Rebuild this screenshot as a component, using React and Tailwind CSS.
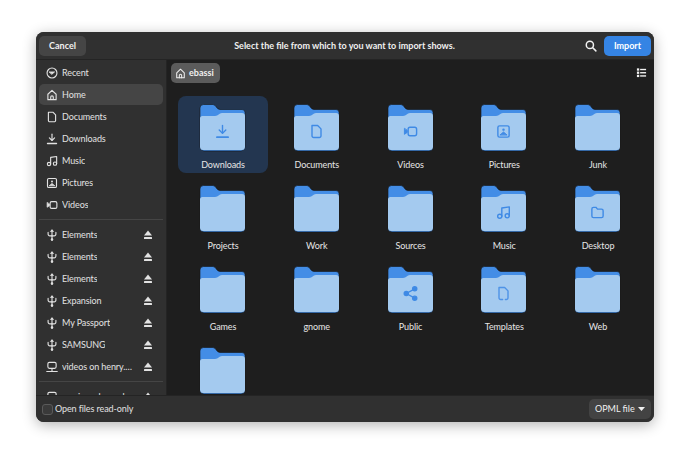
const Ico = ({ size = 12, className = '', children }) => (
  <svg width={size} height={size} viewBox="0 0 16 16" fill="none" stroke="currentColor" strokeWidth="1.5" strokeLinecap="round" strokeLinejoin="round" className={`shrink-0 ${className}`}>
    {children}
  </svg>
);

const icons = {
  recent: <><circle cx="8" cy="8" r="6.6" /><path d="M4.500 6.500h7L8 9.500z" fill="currentColor" strokeWidth="1" /></>,
  home: <><path d="M2.500 14.200V7L8 1.800 13.500 7v7.200z" /><path d="M6.300 14v-3.200a1.700 1.700 0 0 1 3.400 0V14" /></>,
  file: <path d="M3.200 1.600h6l3.600 3.600v7.400a1.800 1.800 0 0 1-1.800 1.800H5a1.800 1.800 0 0 1-1.800-1.800z" />,
  download: <><path d="M8 1.500v8" /><path d="M4.500 6.500 8 10l3.500-3.500" /><path d="M2 14h12" strokeWidth="1.800" /></>,
  music: <><circle cx="4" cy="12" r="2.200" /><circle cx="12" cy="11.500" r="2.200" /><path d="M6.200 12V3.200L14.200 2v9.500" /></>,
  pictures: <><rect x="2" y="2" width="12" height="12" rx="1.800" /><circle cx="8" cy="6" r="1.300" fill="currentColor" strokeWidth="0" /><path d="M4.500 11.500 8 8.500l3.500 3z" fill="currentColor" strokeWidth="1" /></>,
  videos: <><rect x="5.500" y="3.500" width="9" height="9" rx="2" /><path d="M1.500 5v6l3-2V7z" fill="currentColor" strokeWidth="1" /></>,
  usb: <><path d="M8 1.500V15" /><path d="M2.800 4.500v2.200A2.400 2.400 0 0 0 5.200 9.200H8" /><path d="M13.200 4.500v2.200a2.400 2.400 0 0 1-2.400 2.500H8" /><path d="M6.200 3 8 1l1.800 2z" fill="currentColor" strokeWidth="1" /><circle cx="8" cy="14" r="1" fill="currentColor" /></>,
  network: <><rect x="2.500" y="1.800" width="11" height="8" rx="2" /><path d="M8 10v3.500" /><path d="M1 14h14" /></>,
  folder: <path d="M2 4.200A1.700 1.700 0 0 1 3.700 2.500h2.600L8 4.400h4.300A1.700 1.700 0 0 1 14 6.100v5.700a1.700 1.700 0 0 1-1.700 1.700H3.700A1.700 1.700 0 0 1 2 11.800z" />,
  share: <><circle cx="3.500" cy="8" r="2.200" fill="currentColor" /><circle cx="12.500" cy="3" r="2.200" fill="currentColor" /><circle cx="12.500" cy="13" r="2.200" fill="currentColor" /><path d="m3.500 8 9-5M3.500 8l9 5" /></>,
  template: <path d="M3.200 1.600h6l3.600 3.600v7.400a1.800 1.800 0 0 1-1.800 1.800H5a1.800 1.800 0 0 1-1.800-1.800z" strokeDasharray="22 3" opacity="0.85" />,
};

const Eject = () => (
  <svg width="12" height="12" viewBox="0 0 12 12" className="ml-auto mr-[6px] shrink-0" fill="currentColor">
    <path d="M6 1.500 10 6.500H2z" />
    <rect x="2" y="8" width="8" height="2" rx="0.500" />
  </svg>
);

const SideRow = ({ icon, label, active, eject }) => (
  <div className={`flex items-center h-[21px] mb-[1px] pl-[7px] pr-[3px] rounded-[5px] text-[9px] tracking-[-0.1px] text-[#e2e2e2] ${active ? 'bg-[#454545]' : ''}`}>
    <Ico className="mr-[4px]">{icons[icon]}</Ico>
    <span className="truncate max-w-[72px] pt-[1px]">{label}</span>
    {eject && <Eject />}
  </div>
);

const Folder = ({ glyph }) => (
  <div className="relative w-[47px] h-[48px] -ml-[1px]">
    <svg width="47" height="48" viewBox="0 0 47 48">
      <path d="M1 4a3.500 3.500 0 0 1 3.500-3.500h9.500c3 0 3.500 5 7 5h22a3 3 0 0 1 3 3V43a4 4 0 0 1-4 4H5a4 4 0 0 1-4-4z" fill="#438de6" stroke="#141414" strokeWidth="0.600" />
      <path d="M1 14.500c0-1.500.8-2.500 2.500-2.500H16c3.500 0 4-3 7-3h20a3 3 0 0 1 3 3V42.500a3.500 3.500 0 0 1-3.500 3.500H4.500A3.500 3.500 0 0 1 1 42.500z" fill="#a4caef" />
    </svg>
    {glyph && (
      <div className="absolute inset-x-0 top-[20px] flex justify-center text-[#3f8ae5]">
        <Ico size={15}>{icons[glyph]}</Ico>
      </div>
    )}
  </div>
);

const places = [
  ['recent', 'Recent'],
  ['home', 'Home', true],
  ['file', 'Documents'],
  ['download', 'Downloads'],
  ['music', 'Music'],
  ['pictures', 'Pictures'],
  ['videos', 'Videos'],
];

const drives = [
  ['usb', 'Elements'],
  ['usb', 'Elements'],
  ['usb', 'Elements'],
  ['usb', 'Expansion'],
  ['usb', 'My Passport'],
  ['usb', 'SAMSUNG'],
  ['network', 'videos on henry.local'],
];

const folders = [
  ['Downloads', 'download', true],
  ['Documents', 'file'],
  ['Videos', 'videos'],
  ['Pictures', 'pictures'],
  ['Junk'],
  ['Projects'],
  ['Work'],
  ['Sources'],
  ['Music', 'music'],
  ['Desktop', 'folder'],
  ['Games'],
  ['gnome'],
  ['Public', 'share'],
  ['Templates', 'template'],
  ['Web'],
  [''],
];

export default function App() {
  return (
    <div className="w-[690px] h-[460px] bg-white pl-[36px] pt-[32px] overflow-hidden font-['Lato',sans-serif]">
      <div className="w-[618px] h-[390px] rounded-[8px] bg-[#303030] flex flex-col overflow-hidden shadow-[0_3px_14px_rgba(0,0,0,0.3)]">
        {/* header */}
        <div className="h-[28px] shrink-0 bg-[#303030] border-b border-[#242424] flex items-center px-[3px]">
          <button className="w-[47px] h-[20px] rounded-[5px] bg-[#454545] text-[9px] font-bold text-[#f0f0f0]">Cancel</button>
          <div className="flex-1 text-center text-[9px] font-bold text-[#f0f0f0] pl-[18px] pt-[1px]">Select the file from which to you want to import shows.</div>
          <svg width="12" height="12" viewBox="0 0 16 16" fill="none" stroke="#f2f2f2" strokeWidth="2" className="mr-[7px]">
            <circle cx="6.500" cy="6.500" r="4.800" />
            <path d="m10 10 4.500 4.500" strokeLinecap="round" />
          </svg>
          <button className="w-[47px] h-[20px] rounded-[5px] bg-[#3584e4] text-[9px] font-bold text-white">Import</button>
        </div>

        <div className="flex-1 flex min-h-0">
          {/* sidebar */}
          <div className="w-[131px] shrink-0 bg-[#303030] border-r border-[#242424] px-[3px] pt-[2px] overflow-hidden">
            {places.map(([icon, label, active]) => (
              <SideRow key={label} icon={icon} label={label} active={active} />
            ))}
            <div className="h-px bg-[#454545] mt-[4px] mb-[4px]" />
            {drives.map(([icon, label], i) => (
              <SideRow key={i} icon={icon} label={label} eject />
            ))}
            <div className="h-px bg-[#454545] mt-[4px] mb-[4px]" />
            <SideRow icon="network" label="music on henry.local" eject />
          </div>

          {/* main */}
          <div className="flex-1 min-w-0 bg-[#1e1e1e] overflow-hidden">
            <div className="flex justify-between pl-[4px] pr-[7px] pt-[3px] h-[36px]">
              <div className="flex items-center h-[20px] w-[49px] rounded-[5px] bg-[#5b5b5b] pl-[4px] text-[9px] font-bold text-[#f0f0f0] gap-[3px]">
                <Ico size={11}>{icons.home}</Ico>
                ebassi
              </div>
              <svg width="11" height="11" viewBox="0 0 12 12" fill="#f2f2f2" className="mt-[4px]">
                <rect x="1" y="1.500" width="2.500" height="2.500" />
                <rect x="1" y="5" width="2.500" height="2.500" />
                <rect x="1" y="8.500" width="2.500" height="2.500" />
                <rect x="4.500" y="2" width="6.500" height="1.500" />
                <rect x="4.500" y="5.500" width="6.500" height="1.500" />
                <rect x="4.500" y="9" width="6.500" height="1.500" />
              </svg>
            </div>
            <div className="grid grid-cols-[repeat(5,90px)] auto-rows-[77px] gap-x-[3.750px] gap-y-[4px] pl-[11px]">
              {folders.map(([name, glyph, selected], i) => (
                <div key={i} className={`flex flex-col items-center pt-[8px] rounded-[8px] ${selected ? 'bg-[#233650]' : ''}`}>
                  <Folder glyph={glyph} />
                  {name && <span className="text-[9px] tracking-[-0.1px] text-[#e6e6e6] mt-[7px] leading-[12px]">{name}</span>}
                </div>
              ))}
            </div>
          </div>
        </div>

        {/* footer */}
        <div className="h-[27px] shrink-0 bg-[#303030] border-t border-[#242424] flex items-center pl-[6px] pr-[3px]">
          <div className="w-[11px] h-[11px] rounded-[3px] border border-[#5a5a5a] bg-[#3a3a3a] mr-[2px]" />
          <span className="text-[9px] tracking-[-0.1px] text-[#e2e2e2]">Open files read-only</span>
          <div className="ml-auto flex items-center justify-between w-[62px] h-[20px] rounded-[5px] bg-[#434343] px-[6px] text-[9px] text-[#f0f0f0]">
            OPML file
            <svg width="7" height="4" viewBox="0 0 7 4" fill="#f0f0f0"><path d="M0 0h7L3.500 4z" /></svg>
          </div>
        </div>
      </div>
    </div>
  );
}
